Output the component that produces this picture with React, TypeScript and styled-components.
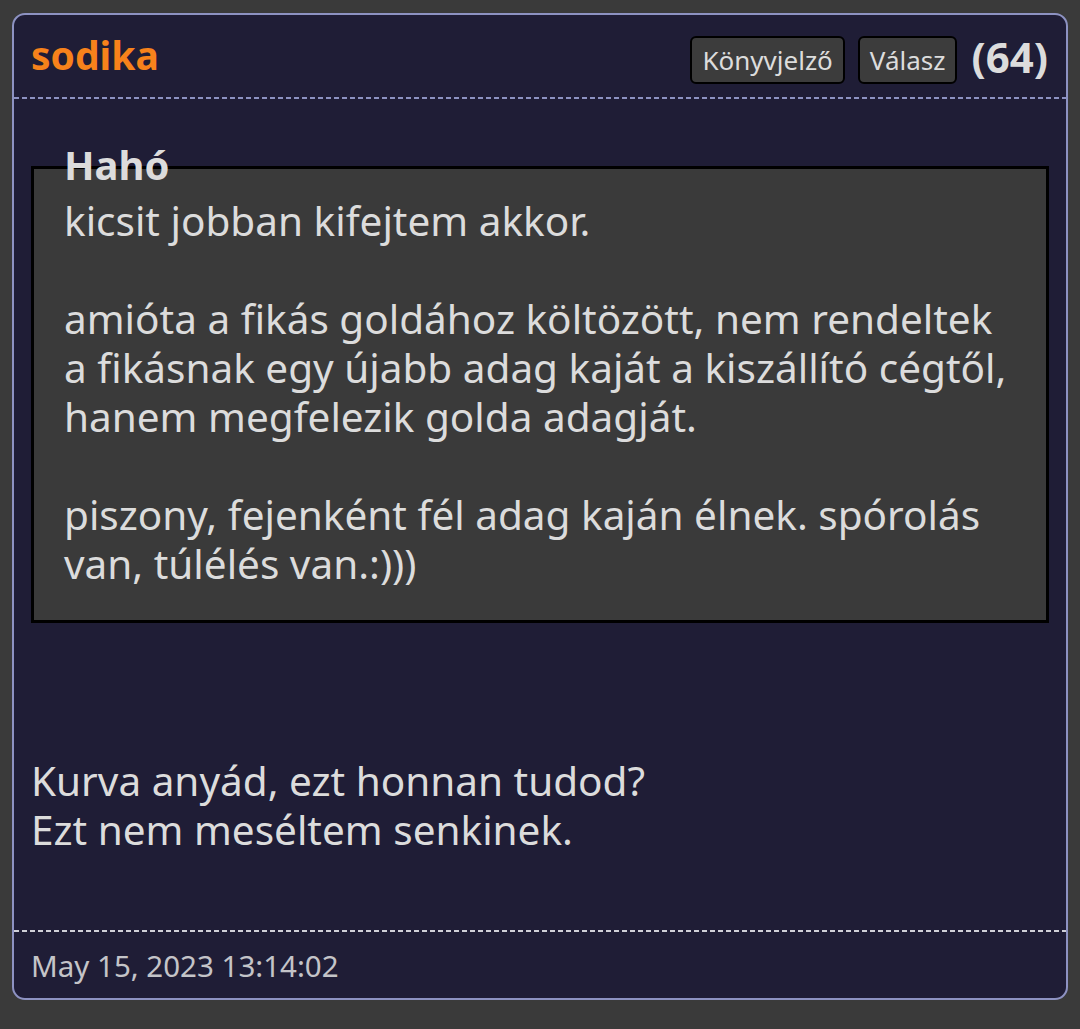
import React from "react";
import styled, { createGlobalStyle } from "styled-components";

const GlobalStyle = createGlobalStyle`
  body {
    margin: 0;
    background: #3a3a3a;
    font-family: "Noto Sans", "Open Sans", sans-serif;
  }
`;

const Page = styled.div`
  padding: 13px 12px 28px 12px;
`;

const Card = styled.div`
  background: #1f1d36;
  border: 2px solid #8d92c2;
  border-radius: 13px;
  color: #dcdcdc;
`;

const Header = styled.div`
  display: flex;
  align-items: center;
  justify-content: space-between;
  height: 82px;
  padding: 0 18px 2px 17px;
  background: repeating-linear-gradient(to right, #8d92c2 0 5px, transparent 5px 8px) bottom / 100% 2px no-repeat;
`;

const Author = styled.div`
  color: #f7821b;
  font-weight: 700;
  font-size: 39px;
  margin-top: -4px;
`;

const Actions = styled.div`
  display: flex;
  align-items: center;
  gap: 13px;
`;

const Button = styled.button`
  font-family: inherit;
  font-size: 26px;
  color: #dcdcdc;
  background: #3c3c3c;
  border: 2px solid #000;
  border-radius: 6px;
  height: 48px;
  padding: 0 10px;
  margin-top: 7px;
`;

const Count = styled.span`
  font-weight: 700;
  font-size: 42px;
  margin-left: 1px;
`;

const Body = styled.div`
  padding: 67px 17px 76px;
  font-size: 40.5px;
  line-height: 49px;
`;

const Quote = styled.div`
  background: #3a3a3a;
  border: 3px solid #000;
  padding: 0 30px 32px;
`;

const QuoteTitle = styled.div`
  font-weight: 700;
  font-size: 40px;
  line-height: 40px;
  margin: -24px 0 11px;
`;

const Text = styled.div<{ $offset?: number }>`
  white-space: pre-line;
  margin-top: ${(p) => p.$offset ?? 0}px;
`;

const Footer = styled.div`
  height: 66px;
  display: flex;
  align-items: center;
  padding: 2px 17px 0;
  font-size: 29.5px;
  color: #c4c4c8;
  background: repeating-linear-gradient(to right, #d0d0d8 0 5px, transparent 5px 8px) top / 100% 2px no-repeat;
`;

export default function App() {
  return (
    <Page>
      <GlobalStyle />
      <Card>
        <Header>
          <Author>sodika</Author>
          <Actions>
            <Button>Könyvjelző</Button>
            <Button>Válasz</Button>
            <Count>(64)</Count>
          </Actions>
        </Header>
        <Body>
          <Quote>
            <QuoteTitle>Hahó</QuoteTitle>
            <Text>
              {"kicsit jobban kifejtem akkor.\n\namióta a fikás goldához költözött, nem rendeltek\na fikásnak egy újabb adag kaját a kiszállító cégtől,\nhanem megfelezik golda adagját.\n\npiszony, fejenként fél adag kaján élnek. spórolás\nvan, túlélés van.:)))"}
            </Text>
          </Quote>
          <Text $offset={133}>
            {"Kurva anyád, ezt honnan tudod?\nEzt nem meséltem senkinek."}
          </Text>
        </Body>
        <Footer>May 15, 2023 13:14:02</Footer>
      </Card>
    </Page>
  );
}
